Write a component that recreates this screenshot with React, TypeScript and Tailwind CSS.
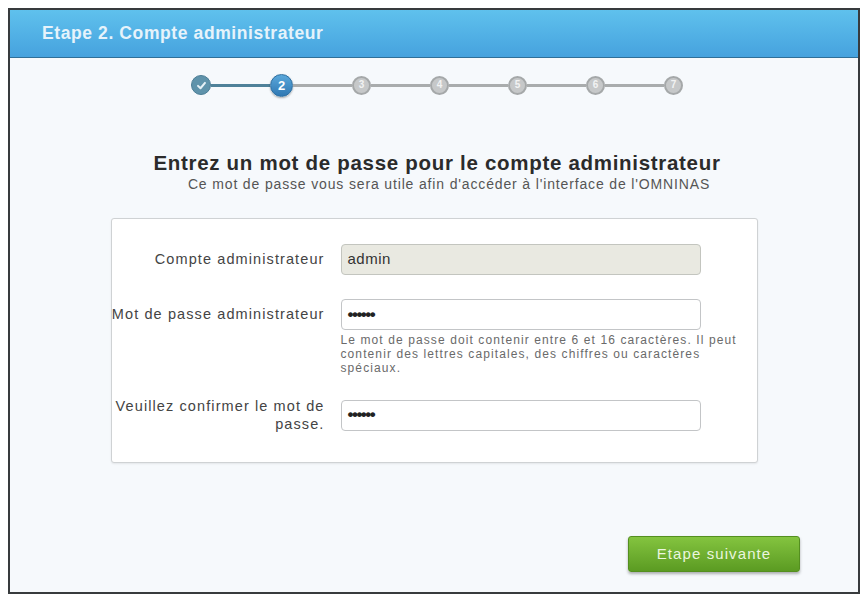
import React from "react";

const font = { fontFamily: '"Liberation Sans", Arial, sans-serif' };

function Done() {
  return (
    <div className="w-[20px] h-[20px] rounded-full bg-[#5f93ab] border border-[#4c7e96] flex items-center justify-center shrink-0">
      <svg width="11" height="11" viewBox="0 0 12 12">
        <path d="M2.2 6.4 L4.9 9 L9.8 3.2" fill="none" stroke="#e6f1f6" strokeWidth="2.2" strokeLinecap="round" strokeLinejoin="round" />
      </svg>
    </div>
  );
}

function Active() {
  return (
    <div className="w-[23px] h-[23px] rounded-full bg-gradient-to-b from-[#5aa8db] to-[#2f78b3] border border-[#2e6e9f] flex items-center justify-center shrink-0 shadow-[0_1px_2px_rgba(0,0,0,0.3)]">
      <span className="text-[13px] font-bold text-white leading-none">2</span>
    </div>
  );
}

function Pending({ n }: { n: number }) {
  return (
    <div className="w-[19px] h-[19px] rounded-full bg-[#c6c8c9] border-2 border-[#a5a8a9] flex items-center justify-center shrink-0">
      <span className="text-[10px] font-bold text-[#f2f3f3] leading-none">{n}</span>
    </div>
  );
}

function Line({ dark }: { dark?: boolean }) {
  return <div className={dark ? "h-[3px] w-[59px] bg-[#4f8199]" : "h-[3px] w-[59px] bg-[#a9acad]"} />;
}

export default function App() {
  return (
    <div className="w-[865px] h-[596px] bg-white pt-[8px] pl-[8px]" style={font}>
      <div className="w-[852px] h-[586px] border-2 border-[#383b3d] bg-[#f6f9fc] flex flex-col">
        <div className="h-[48px] bg-gradient-to-b from-[#5fc1ed] to-[#46a2de] border-b border-[#2f6f98] flex items-center pl-[32px] shrink-0">
          <span className="text-[17.5px] font-bold text-[#e6f3fb] tracking-[0.6px]">Etape 2. Compte administrateur</span>
        </div>
        <div className="flex items-center pl-[181px] pt-[16px] h-[38px]">
          <Done />
          <Line dark />
          <Active />
          <Line />
          <Pending n={3} />
          <Line />
          <Pending n={4} />
          <Line />
          <Pending n={5} />
          <Line />
          <Pending n={6} />
          <Line />
          <Pending n={7} />
        </div>
        <div className="flex flex-col items-center mt-[56px]">
          <div className="text-[20.5px] font-bold text-[#2b2b2b] leading-[22px] tracking-[0.7px] pl-[6px]">Entrez un mot de passe pour le compte administrateur</div>
          <div className="text-[14px] text-[#555] leading-[16px] mt-[2px] pl-[30px] tracking-[0.85px]">Ce mot de passe vous sera utile afin d'accéder à l'interface de l'OMNINAS</div>
        </div>
        <div className="mx-auto mt-[26px] w-[647px] h-[245px] bg-white border border-[#cfd2d4] rounded-[3px] shadow-[0_1px_2px_rgba(0,0,0,0.08)] flex flex-col pt-[25px]">
          <div className="flex items-center">
            <div className="w-[213px] text-right text-[14.5px] tracking-[1.1px] text-[#444] whitespace-nowrap">Compte administrateur</div>
            <div className="ml-[16px] w-[360px] h-[31px] rounded-[4px] bg-[#e9e9e1] border border-[#c3c5bf] flex items-center pl-[6px] text-[15px] tracking-[0.5px] text-[#333]">admin</div>
          </div>
          <div className="flex items-start mt-[24px]">
            <div className="w-[213px] h-[31px] flex items-center justify-end text-right text-[14.5px] tracking-[1.1px] text-[#444] whitespace-nowrap">Mot de passe administrateur</div>
            <div className="ml-[16px] w-[404px] flex flex-col">
              <div className="w-[360px] h-[31px] rounded-[4px] bg-white border border-[#c3c5c7] flex items-center pl-[6px] text-[17px] font-bold text-[#222] tracking-[-1.5px]">••••••</div>
              <div className="mt-[3px] text-[12px] leading-[14px] tracking-[1.1px] text-[#6a6a6a]">Le mot de passe doit contenir entre 6 et 16 caractères. Il peut contenir des lettres capitales, des chiffres ou caractères spéciaux.</div>
            </div>
          </div>
          <div className="flex items-center mt-[22px]">
            <div className="w-[213px] text-right text-[14.5px] leading-[18px] tracking-[1.1px] text-[#444]">Veuillez confirmer le mot de passe.</div>
            <div className="ml-[16px] w-[360px] h-[31px] rounded-[4px] bg-white border border-[#c3c5c7] flex items-center pl-[6px] text-[17px] font-bold text-[#222] tracking-[-1.5px]">••••••</div>
          </div>
        </div>
        <div className="flex justify-end pr-[58px] mt-[73px]">
          <div className="w-[172px] h-[36px] rounded-[3px] bg-gradient-to-b from-[#84c43f] to-[#5b9b22] border border-[#548f1f] shadow-[0_2px_3px_rgba(0,0,0,0.3)] flex items-center justify-center">
            <span className="text-[15px] tracking-[1.1px] text-[#eaf6df]">Etape suivante</span>
          </div>
        </div>
      </div>
    </div>
  );
}
